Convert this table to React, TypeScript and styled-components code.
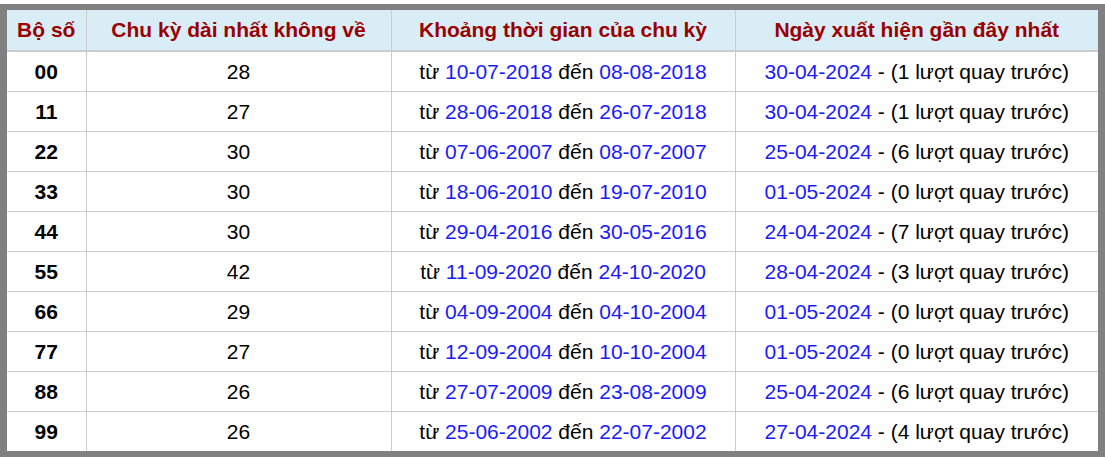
import styled, { createGlobalStyle } from "styled-components";

const GlobalStyle = createGlobalStyle`
  body {
    margin: 0;
    background: #fff;
    font-family: "Liberation Sans", Arial, sans-serif;
  }
`;

const Frame = styled.div`
  margin-top: 4px;
  border: 6px solid #808080;
  border-left-width: 7px;
  border-right-width: 7px;
  width: 1091px;
  background: #fff;
`;

const Table = styled.table`
  width: 1091px;
  border-collapse: collapse;
  table-layout: fixed;
  font-size: 21px;
  color: #000;
`;

const Th = styled.th`
  height: 40px;
  padding: 0;
  background: #d9edf7;
  color: #990000;
  font-weight: bold;
  text-align: center;
  border-left: 1px solid #ccc;
  border-bottom: 2px solid #ccc;
  &:first-child {
    border-left: none;
  }
`;

const Td = styled.td<{ $bold?: boolean }>`
  height: 39px;
  padding: 0;
  text-align: center;
  font-weight: ${(p) => (p.$bold ? "bold" : "normal")};
  border-left: 1px solid #ccc;
  border-top: 1px solid #ccc;
  &:first-child {
    border-left: none;
  }
`;

const Row = styled.tr`
  &:nth-child(1) td {
    border-top: none;
  }
`;

const Date = styled.span`
  color: #1a1aff;
`;

const rows = [
  ["00", "28", "10-07-2018", "08-08-2018", "30-04-2024", 1],
  ["11", "27", "28-06-2018", "26-07-2018", "30-04-2024", 1],
  ["22", "30", "07-06-2007", "08-07-2007", "25-04-2024", 6],
  ["33", "30", "18-06-2010", "19-07-2010", "01-05-2024", 0],
  ["44", "30", "29-04-2016", "30-05-2016", "24-04-2024", 7],
  ["55", "42", "11-09-2020", "24-10-2020", "28-04-2024", 3],
  ["66", "29", "04-09-2004", "04-10-2004", "01-05-2024", 0],
  ["77", "27", "12-09-2004", "10-10-2004", "01-05-2024", 0],
  ["88", "26", "27-07-2009", "23-08-2009", "25-04-2024", 6],
  ["99", "26", "25-06-2002", "22-07-2002", "27-04-2024", 4],
] as const;

export default function App() {
  return (
    <>
      <GlobalStyle />
      <Frame>
        <Table>
          <colgroup>
            <col style={{ width: 79 }} />
            <col style={{ width: 305 }} />
            <col style={{ width: 344 }} />
            <col style={{ width: 363 }} />
          </colgroup>
          <thead>
            <tr>
              <Th>Bộ số</Th>
              <Th>Chu kỳ dài nhất không về</Th>
              <Th>Khoảng thời gian của chu kỳ</Th>
              <Th>Ngày xuất hiện gần đây nhất</Th>
            </tr>
          </thead>
          <tbody>
            {rows.map(([num, len, from, to, last, ago]) => (
              <Row key={num}>
                <Td $bold>{num}</Td>
                <Td>{len}</Td>
                <Td>
                  từ <Date>{from}</Date> đến <Date>{to}</Date>
                </Td>
                <Td>
                  <Date>{last}</Date> - ({ago} lượt quay trước)
                </Td>
              </Row>
            ))}
          </tbody>
        </Table>
      </Frame>
    </>
  );
}
